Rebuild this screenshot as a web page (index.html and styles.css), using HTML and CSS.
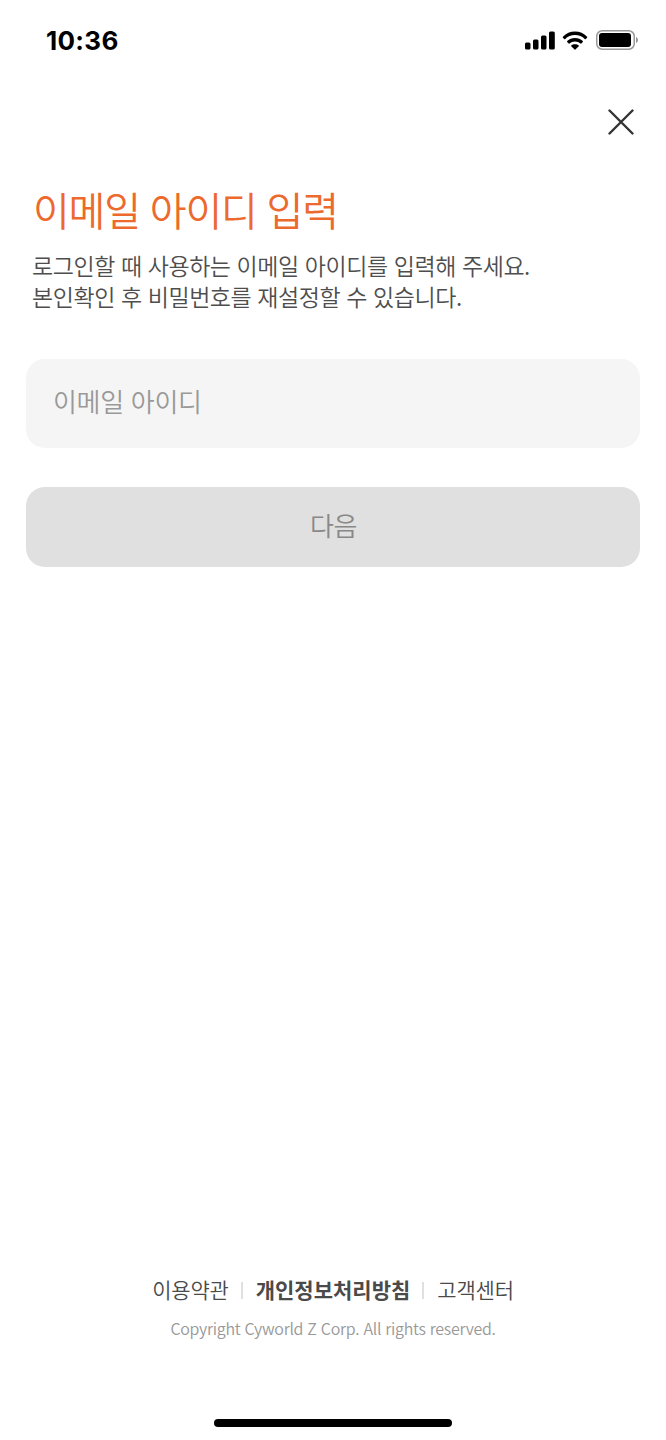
FILE: index.html
```html
<!DOCTYPE html>
<html lang="ko">
<head>
  <meta charset="UTF-8" />
  <meta name="viewport" content="width=device-width, initial-scale=1.0" />
  <title>이메일 아이디 입력</title>
  <link rel="stylesheet" href="styles.css">
</head>
<body>
  <div class="screen">
    <div class="status-bar">
      <span class="time">10:36</span>
      <div class="status-icons">
        <svg class="signal" width="30" height="19" viewBox="0 0 30 19">
          <rect x="0" y="11.500" width="5.500" height="7" rx="1.500" />
          <rect x="8" y="8.500" width="5.500" height="10" rx="1.500" />
          <rect x="16" y="4.500" width="5.500" height="14" rx="1.500" />
          <rect x="24" y="0.500" width="5.800" height="18" rx="1.500" />
        </svg>
        <svg class="wifi" width="26" height="19" viewBox="0 0 26 19">
          <path d="M13 4.100C16.900 4.100 20.300 5.600 23 8.200Q23.400 8.500 23.800 8.100L25.100 6.700Q25.500 6.200 25.100 5.800C21.900 2.400 17.700 .5 13 .5S4.100 2.400 .9 5.800Q.5 6.200 .9 6.700L2.200 8.100Q2.600 8.500 3 8.200C5.700 5.600 9.100 4.100 13 4.100Z" />
          <path d="M13 10.500C15.100 10.500 17 11.200 18.500 12.500Q18.900 12.900 19.300 12.500L20.800 10.900Q21.200 10.500 20.800 10.100C18.700 8.100 16 6.900 13 6.900S7.300 8.100 5.200 10.100Q4.800 10.500 5.200 10.900L6.700 12.500Q7.100 12.900 7.500 12.500C9 11.200 10.900 10.500 13 10.500Z" />
          <path d="M13 13.200C11.500 13.200 10.200 13.700 9.200 14.500Q8.900 14.900 9.200 15.200L12.600 18.500Q13 18.900 13.400 18.500L16.800 15.200Q17.100 14.900 16.800 14.500C15.800 13.700 14.500 13.200 13 13.200Z" />
        </svg>
        <svg class="battery" width="43" height="20" viewBox="0 0 43 20">
          <rect class="battery-case" x="0.750" y="0.750" width="37.500" height="18.500" rx="5.500" />
          <rect x="3" y="3" width="32" height="14" rx="3" />
          <path class="battery-tip" d="M40 7C42.700 7.800 42.700 12.200 40 13Z" />
        </svg>
      </div>
    </div>

    <header class="header">
      <button class="close" type="button" aria-label="닫기">
        <svg width="26" height="26" viewBox="0 0 26 26">
          <path d="M1.500 1.500L24.500 24.500M24.500 1.500L1.500 24.500" />
        </svg>
      </button>
    </header>

    <main class="content">
      <h1 class="title">이메일 아이디 입력</h1>
      <p class="desc">로그인할 때 사용하는 이메일 아이디를 입력해 주세요.<br>본인확인 후 비밀번호를 재설정할 수 있습니다.</p>
      <form class="form">
        <input class="field" type="email" placeholder="이메일 아이디">
        <button class="next" type="button" disabled>다음</button>
      </form>
    </main>

    <footer class="footer">
      <nav class="links">
        <a class="terms">이용약관</a>
        <a class="privacy">개인정보처리방침</a>
        <a class="support">고객센터</a>
      </nav>
      <p class="copyright">Copyright Cyworld Z Corp. All rights reserved.</p>
      <div class="home-bar"></div>
    </footer>
  </div>
</body>
</html>
```
FILE: styles.css
```css
* {
  box-sizing: border-box;
}
body {
  margin: 0;
  background: #fff;
  font-family: "Noto Sans CJK KR", sans-serif;
  font-weight: 350;
}
.screen {
  display: flex;
  flex-direction: column;
  height: 1440px;
}
.status-bar {
  display: flex;
  justify-content: space-between;
  align-items: center;
  height: 80px;
  padding: 0 27px 0 46px;
}
.time {
  font-family: Inter, sans-serif;
  font-size: 26px;
  font-weight: 750;
  letter-spacing: 0.3px;
}
.status-icons {
  display: flex;
  align-items: center;
}
.wifi {
  margin: 0 8px 0 7px;
}
.header {
  display: flex;
  justify-content: flex-end;
  align-items: center;
  height: 84px;
  padding-right: 32px;
}
.close {
  display: flex;
  padding: 0;
  border: none;
  background: none;
}
.close path {
  stroke: #333;
  stroke-width: 2.4;
  stroke-linecap: round;
}
.battery-case {
  fill: none;
  stroke: #999;
  stroke-width: 1.5;
}
.battery-tip {
  fill: #999;
}
.content {
  padding: 15px 26px 0;
}
.title {
  margin: 0 0 11px 7px;
  color: #ec6a2d;
  font-size: 40px;
  font-weight: 350;
  line-height: 60px;
  letter-spacing: -1.2px;
}
.desc {
  margin: 0 0 47px 6px;
  color: #4e4e4e;
  font-size: 23px;
  line-height: 31px;
  letter-spacing: -0.43px;
}
.form {
  display: flex;
  flex-direction: column;
  gap: 39px;
}
.field {
  height: 89px;
  padding: 0 27px 6px;
  border: none;
  border-radius: 19px;
  background: #f5f5f5;
  font: inherit;
  font-size: 26px;
  letter-spacing: -0.3px;
}
.field::placeholder {
  color: #999;
}
.next {
  height: 80px;
  padding: 0 0 5px 1px;
  border: none;
  border-radius: 19px;
  background: #e0e0e0;
  color: #888;
  font: inherit;
  font-size: 26px;
  letter-spacing: -0.4px;
}
.footer {
  display: flex;
  flex-direction: column;
  align-items: center;
  margin-top: auto;
}
.links {
  display: flex;
  align-items: center;
  color: #4a4a4a;
  font-size: 21px;
  line-height: 30px;
  letter-spacing: -0.2px;
}
.links a + a {
  display: flex;
  align-items: center;
}
.links a + a::before {
  content: "";
  width: 2px;
  height: 17px;
  margin: 2px 13px 0 12px;
  background: #e0e0e0;
}
.privacy {
  font-weight: 700;
  letter-spacing: 0;
}
.copyright {
  margin: 12px 0 79px;
  color: #999;
  font-size: 16px;
  line-height: 24px;
  letter-spacing: -0.3px;
}
.home-bar {
  width: 238px;
  height: 8px;
  margin-bottom: 13px;
  border-radius: 4px;
  background: #000;
}
```
